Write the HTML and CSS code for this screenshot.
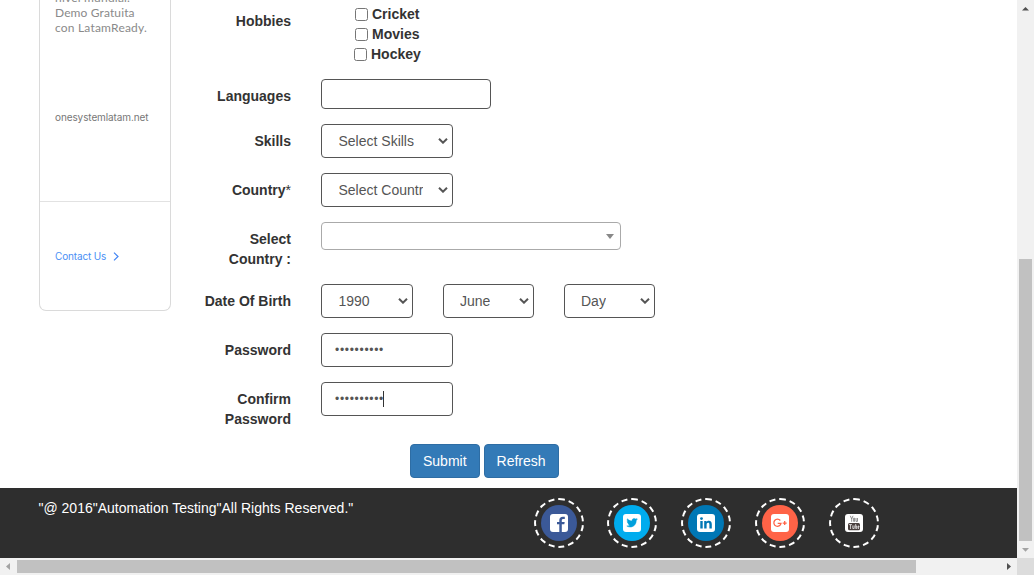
FILE: index.html
```html
<!DOCTYPE html>
<html lang="en">
<head>
<meta charset="utf-8">
<title>Register</title>
<link rel="stylesheet" href="styles.css">
</head>
<body>
<div class="window">
  <div class="page">
    <main class="content">
      <aside class="ad">
        <div class="ad-body">
          <p class="ad-text">nivel mundial.<br><span class="ad-line-two">Demo Gratuita</span><br><span class="ad-line-three">con LatamReady.</span></p>
          <p class="ad-site">onesystemlatam.net</p>
        </div>
        <div class="ad-contact">
          <span class="ad-link">Contact Us</span>
          <svg class="ad-arrow" viewBox="0 0 6 9"><path d="M1 .6 5 4.5 1 8.4"/></svg>
        </div>
      </aside>
      <form class="form">
        <div class="row">
          <span class="label">Hobbies</span>
          <div class="checks">
            <label class="check"><span class="box"></span>Cricket</label>
            <label class="check"><span class="box"></span>Movies</label>
            <label class="check check-last"><span class="box"></span>Hockey</label>
          </div>
        </div>
        <div class="row"><span class="label">Languages</span><div class="languages"></div></div>
        <div class="row">
          <span class="label">Skills</span>
          <div class="select"><span class="value">Select Skills</span><svg class="chevron" viewBox="0 0 10 6"><path d="M1 .8 5 4.7 9 .8"/></svg></div>
        </div>
        <div class="row">
          <span class="label">Country<span class="star">*</span></span>
          <div class="select"><span class="value">Select Country</span><svg class="chevron" viewBox="0 0 10 6"><path d="M1 .8 5 4.7 9 .8"/></svg></div>
        </div>
        <div class="row">
          <span class="label">Select Country&nbsp;:</span>
          <div class="combo"><span class="triangle"></span></div>
        </div>
        <div class="row">
          <span class="label">Date Of Birth</span>
          <div class="dates">
            <div class="select year"><span class="value">1990</span><svg class="chevron" viewBox="0 0 10 6"><path d="M1 .8 5 4.7 9 .8"/></svg></div>
            <div class="select part"><span class="value">June</span><svg class="chevron" viewBox="0 0 10 6"><path d="M1 .8 5 4.7 9 .8"/></svg></div>
            <div class="select part"><span class="value">Day</span><svg class="chevron" viewBox="0 0 10 6"><path d="M1 .8 5 4.7 9 .8"/></svg></div>
          </div>
        </div>
        <div class="row"><span class="label">Password</span><div class="password">••••••••••</div></div>
        <div class="row"><span class="label">Confirm Password</span><div class="password">••••••••••<span class="caret"></span></div></div>
        <div class="actions"><button type="button" class="btn">Submit</button><button type="button" class="btn">Refresh</button></div>
      </form>
    </main>
    <footer class="footer">
      <p class="copyright">"@ 2016"Automation Testing"All Rights Reserved."</p>
      <div class="social">
        <a class="ring"><span class="disc facebook"><svg class="logo" viewBox="0 0 18 18"><rect width="18" height="18" rx="3" fill="#fff"/><path d="M9.300 18V10.300H7V8h2.300V6.300c0-2.300 1.300-3.600 3.600-3.600h1.900v2.200h-1.400c-1.200 0-1.600.5-1.600 1.500V8h2.900l-.4 2.300h-2.500V18z" fill="#3b5998"/></svg></span></a>
        <a class="ring"><span class="disc twitter"><svg class="logo" viewBox="0 0 18 18"><rect width="18" height="18" rx="3" fill="#fff"/><path d="M14.300 5.400c-.4.2-.8.3-1.200.4.4-.3.7-.7.9-1.200-.4.3-.9.5-1.300.5a2.200 2.200 0 0 0-3.700 2C7.200 7 5.600 6.100 4.500 4.800c-.6 1-.3 2.200.7 2.900-.4 0-.7-.1-1-.3 0 1 .7 1.900 1.700 2.100-.3.100-.6.100-.9 0 .3.900 1.100 1.500 2 1.500-.9.700-2 1.100-3.200 1 4.500 2.700 9.500-.3 9.400-5.500.4-.3.800-.7 1.100-1.100z" fill="#00a0dc" stroke="#00a0dc" stroke-width=".5"/></svg></span></a>
        <a class="ring"><span class="disc linkedin"><svg class="logo" viewBox="0 0 18 18"><rect width="18" height="18" rx="3" fill="#fff"/><path d="M3.300 7h2.400v7.600H3.300zM7.200 7h2.300v1.100c.5-.8 1.300-1.300 2.400-1.300 2 0 2.900 1.200 2.900 3.400v4.400h-2.400v-4c0-1.200-.4-1.800-1.300-1.800-1 0-1.500.7-1.500 1.900v3.900H7.200z" fill="#0077b5"/><circle cx="4.500" cy="4.600" r="1.400" fill="#0077b5"/></svg></span></a>
        <a class="ring"><span class="disc google"><svg class="logo" viewBox="0 0 18 18"><rect width="18" height="18" rx="3" fill="#fff"/><path d="M9.300 6.500A3.600 3.600 0 1 0 10 9.400H6.700M11.700 9.100h4M13.700 7.100v4" fill="none" stroke="#ff6347" stroke-width="1.300"/></svg></span></a>
        <a class="ring"><span class="disc youtube"><svg class="logo" viewBox="0 0 18 18"><rect width="18" height="18" rx="3" fill="#fff"/><path d="M5.300 1.800 6.700 5v2.800M8 1.800 6.700 5M11 4v3.400h1.500V4M8.600 4.200h1v3.200h-1z" fill="none" stroke="#777" stroke-width=".8"/><rect x="3" y="9" width="12" height="7.200" rx="1.500" fill="#4a403e"/><path d="M4 10.600h3M5.500 10.600V15M7.800 11.500v3h1.400v-3M10.700 10v4.500h1v-2.500h-1M14 14.500h-.9v-2.500h.9v1.200h-.9" fill="none" stroke="#fff" stroke-width=".7"/></svg></span></a>
      </div>
    </footer>
  </div>
  <div class="vbar"><svg class="arrow" viewBox="0 0 17 17"><path d="M5 10.500h7L8.500 7z" fill="#505050"/></svg><div class="vthumb"></div><svg class="arrow" viewBox="0 0 17 17"><path d="M5 7h7l-3.500 3.800z" fill="#a3a3a3"/></svg></div>
  <div class="hbar"><svg class="arrow" viewBox="0 0 17 17"><path d="M10 5v7L6 8.500z" fill="#a3a3a3"/></svg><div class="hthumb"></div><svg class="arrow" viewBox="0 0 17 17"><path d="M7 5v7l4-3.500z" fill="#505050"/></svg></div>
  <div class="corner"></div>
</div>
</body>
</html>
```
FILE: styles.css
```css
* { box-sizing: border-box; }
body { margin: 0; overflow: hidden; background: #fff; color: #333; font: 14px/20px "Liberation Sans", Arial, sans-serif; }
p { margin: 0; }
.window { display: grid; grid-template: 558px 17px / 1017px 17px; }
.page { overflow: hidden; }
.content { display: flex; height: 488px; }

.ad { display: flex; flex-direction: column; width: 132px; height: 311px; margin-left: 39px; border: 1px solid #dadada; border-top: 0; border-radius: 0 0 7px 7px; font-family: Lato, sans-serif; overflow: hidden; }
.ad-body { display: flex; flex-direction: column; flex: none; height: 202px; padding-left: 15px; border-bottom: 1px solid #e2e2e2; }
.ad-text { margin-top: -10px; color: #8a8a8a; font-size: 12px; line-height: 15px; letter-spacing: .2px; white-space: nowrap; }
.ad-line-two { letter-spacing: .12px; }
.ad-site { margin-top: 75px; color: #777; font: 10px/15px Inter, sans-serif; letter-spacing: -.1px; }
.ad-contact { display: flex; align-items: center; gap: 7px; height: 109px; padding-left: 15px; }
.ad-link { color: #4a90f5; font: 10px/15px Inter, sans-serif; letter-spacing: -.15px; }
.ad-arrow { width: 6px; height: 9px; fill: none; stroke: #4285f4; stroke-width: 1.2; }

.form { display: flex; flex-direction: column; gap: 15px; margin-left: 30px; padding-top: 4px; width: 460px; }
.row { display: flex; align-items: flex-start; gap: 30px; }
.label { width: 90px; padding-top: 7px; text-align: right; font-weight: bold; }
.star { font-weight: normal; }
.checks { padding-left: 34px; }
.check { display: flex; align-items: center; gap: 4px; height: 20px; font-weight: bold; }
.check-last { margin-left: -1px; }
.box { width: 13px; height: 13px; border: 1px solid #767676; border-radius: 2.5px; }
.languages { width: 170px; height: 30px; border: 1px solid #555; border-radius: 4px; }
.select { display: flex; align-items: center; justify-content: space-between; width: 132px; height: 34px; padding: 0 4px 0 16.5px; border: 1px solid #555; border-radius: 4px; color: #555; }
.value { max-width: 84px; overflow: hidden; white-space: nowrap; }
.chevron { width: 10px; height: 6px; fill: none; stroke: #555; stroke-width: 2; }
.combo { display: flex; align-items: center; justify-content: flex-end; width: 300px; height: 28px; padding-right: 6px; border: 1px solid #aaa; border-radius: 4px; }
.triangle { border: 4px solid transparent; border-top: 5px solid #888; border-bottom: 0; }
.dates { display: flex; gap: 30px; }
.year { width: 92px; }
.part { width: 91px; padding-left: 16px; }
.password { display: flex; align-items: center; width: 132px; height: 34px; padding-left: 13px; border: 1px solid #555; border-radius: 4px; color: #555; font-size: 12px; letter-spacing: .7px; }
.caret { width: 1px; height: 16px; margin-left: -1px; background: #333; }
.actions { display: flex; gap: 4px; padding-left: 209px; }
.btn { height: 34px; padding: 0 12px; border: 1px solid #2e6da4; border-radius: 4px; background: #337ab7; color: #fff; font: inherit; }

.footer { display: flex; height: 70px; background: #2e2e2e; color: #fff; }
.copyright { width: 495.1px; padding: 10px 0 0; margin-left: 38.5px; }
.social { display: flex; gap: 23.75px; padding-top: 10px; }
.ring { display: flex; align-items: center; justify-content: center; width: 50px; height: 50px; border: 2px dashed #fff; border-radius: 50%; }
.disc { display: flex; align-items: center; justify-content: center; width: 36px; height: 36px; border-radius: 50%; }
.logo { width: 18px; height: 18px; }
.facebook { background: #3b5998; }
.twitter { background: #00acee; }
.linkedin { background: #0077b5; }
.google { background: #ff6347; }

.vbar { display: flex; flex-direction: column; align-items: center; justify-content: space-between; background: #f1f1f1; }
.vthumb { width: 13px; height: 282px; margin-top: 242px; background: #c1c1c1; }
.hbar { display: flex; align-items: center; background: #f1f1f1; }
.hthumb { width: 899px; height: 13px; margin-right: 84px; background: #c1c1c1; }
.arrow { width: 17px; height: 17px; flex: none; }
.corner { background: #dcdcdc; }
```
